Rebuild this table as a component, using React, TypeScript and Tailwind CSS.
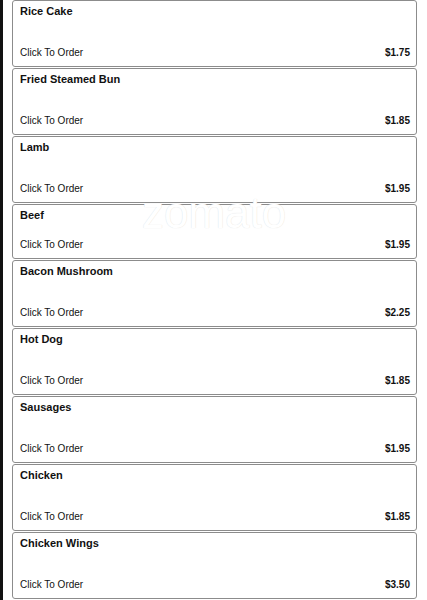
import React from "react";

const items: { name: string; price: string; short?: boolean }[] = [
  { name: "Rice Cake", price: "$1.75" },
  { name: "Fried Steamed Bun", price: "$1.85" },
  { name: "Lamb", price: "$1.95" },
  { name: "Beef", price: "$1.95", short: true },
  { name: "Bacon Mushroom", price: "$2.25" },
  { name: "Hot Dog", price: "$1.85" },
  { name: "Sausages", price: "$1.95" },
  { name: "Chicken", price: "$1.85" },
  { name: "Chicken Wings", price: "$3.50" },
];

export default function App() {
  return (
    <div
      className="relative flex h-[600px] w-[427px] overflow-hidden bg-white"
      style={{ fontFamily: '"Liberation Sans", Arial, sans-serif' }}
    >
      <div className="w-[3px] shrink-0 bg-[#111]" />
      <div className="ml-[9px] flex w-[405px] shrink-0 flex-col gap-[1px]">
        {items.map((it) => (
          <div
            key={it.name}
            className={`flex shrink-0 flex-col justify-between rounded-[3px] border border-[#8c8c8c] bg-white pb-[7px] pl-[7px] pr-[6px] pt-[4px] ${
              it.short ? "h-[55px]" : "h-[67px]"
            }`}
          >
            <div className="text-[11px] font-bold leading-[13px] text-[#111]">
              {it.name}
            </div>
            <div className="flex items-center justify-between text-[10px] leading-[12px] text-[#111]">
              <span>Click To Order</span>
              <span className="font-bold">{it.price}</span>
            </div>
          </div>
        ))}
      </div>
      <div
        className="pointer-events-none absolute left-[142px] top-[191px] text-[44px] leading-[44px] text-white"
        style={{ textShadow: "0 0 1px #d8d8d8" }}
      >
        zomato
      </div>
    </div>
  );
}
